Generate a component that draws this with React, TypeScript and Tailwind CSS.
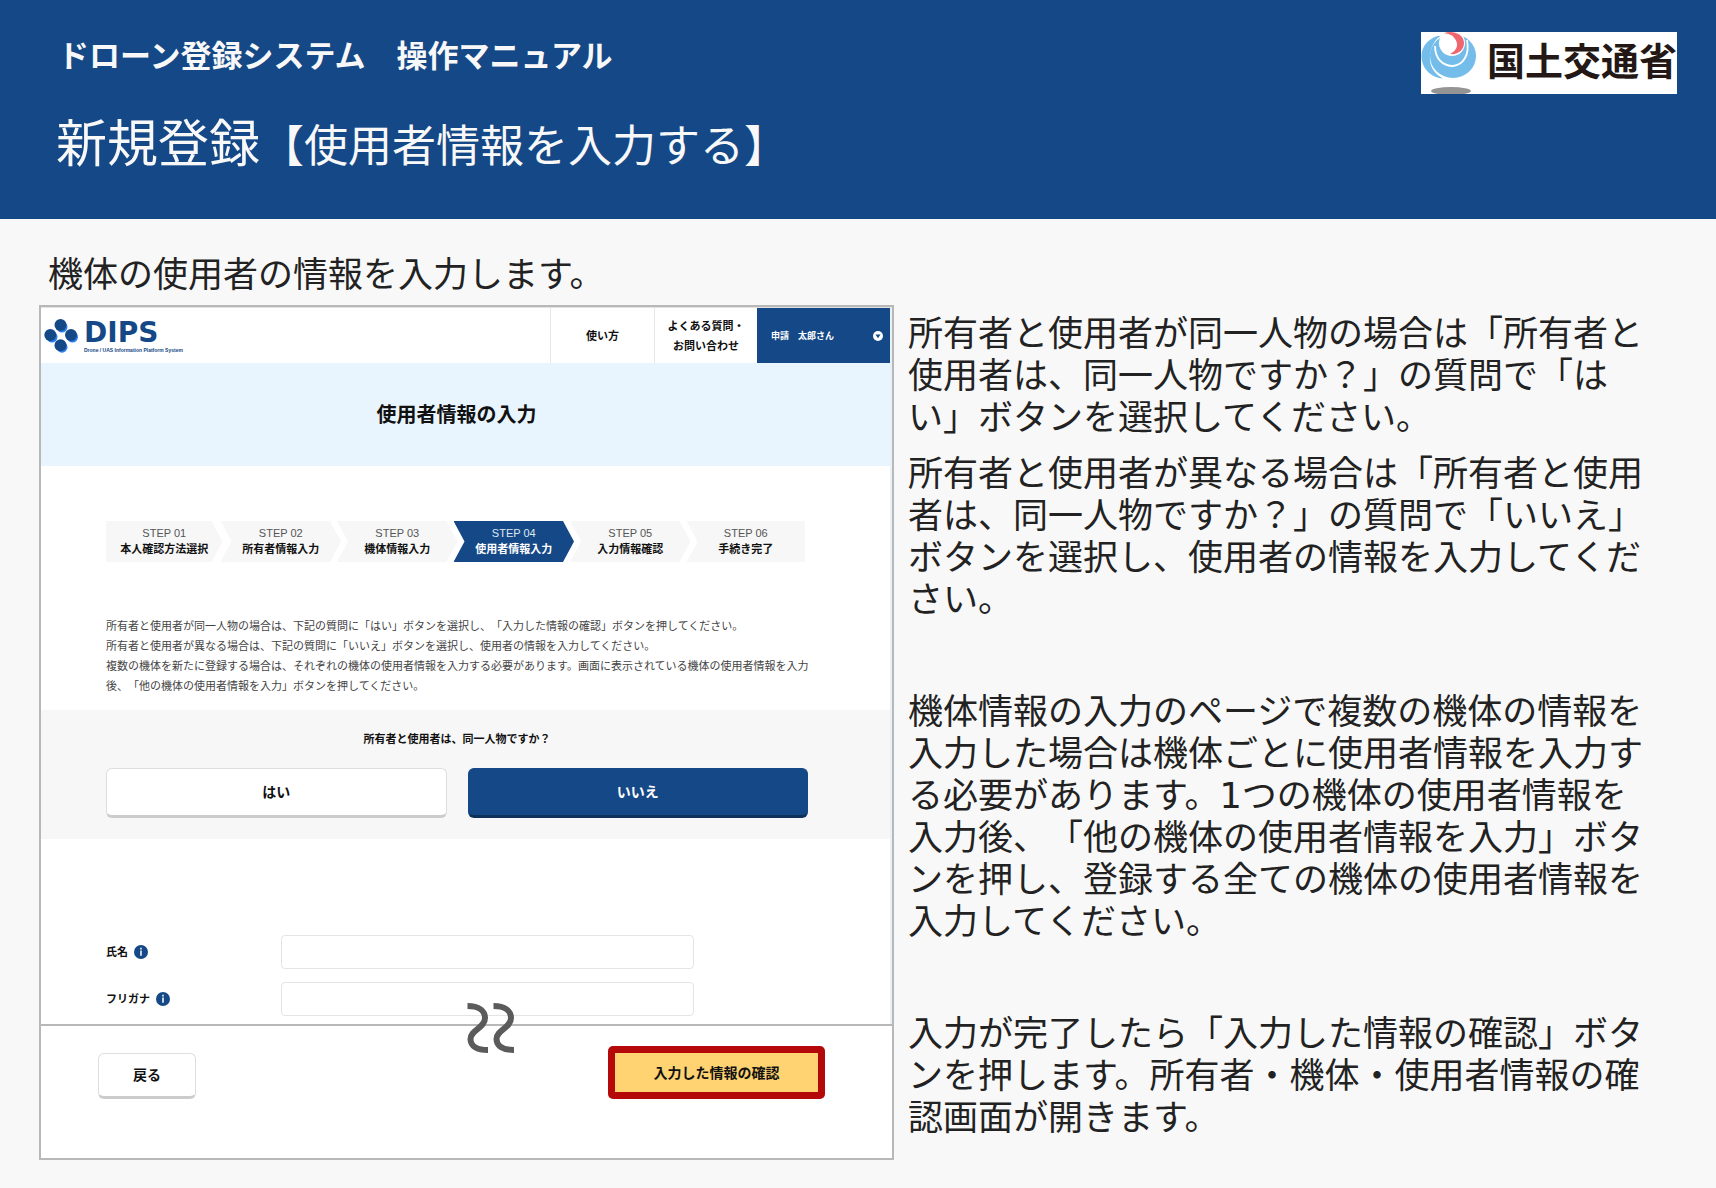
import { Fragment } from 'react';

const steps = [
  { no: 'STEP 01', label: '本人確認方法選択' },
  { no: 'STEP 02', label: '所有者情報入力' },
  { no: 'STEP 03', label: '機体情報入力' },
  { no: 'STEP 04', label: '使用者情報入力', active: true },
  { no: 'STEP 05', label: '入力情報確認' },
  { no: 'STEP 06', label: '手続き完了' },
];

const notes = [
  '所有者と使用者が同一人物の場合は、下記の質問に「はい」ボタンを選択し、「入力した情報の確認」ボタンを押してください。',
  '所有者と使用者が異なる場合は、下記の質問に「いいえ」ボタンを選択し、使用者の情報を入力してください。',
  '複数の機体を新たに登録する場合は、それぞれの機体の使用者情報を入力する必要があります。画面に表示されている機体の使用者情報を入力',
  '後、「他の機体の使用者情報を入力」ボタンを押してください。',
];

const fields = [
  { id: 'name', label: '氏名' },
  { id: 'kana', label: 'フリガナ' },
];

const guide = [
  [
    '所有者と使用者が同一人物の場合は「所有者と',
    '使用者は、同一人物ですか？」の質問で「は',
    'い」ボタンを選択してください。',
  ],
  [
    '所有者と使用者が異なる場合は「所有者と使用',
    '者は、同一人物ですか？」の質問で「いいえ」',
    'ボタンを選択し、使用者の情報を入力してくだ',
    'さい。',
  ],
  [
    '機体情報の入力のページで複数の機体の情報を',
    '入力した場合は機体ごとに使用者情報を入力す',
    'る必要があります。1つの機体の使用者情報を',
    '入力後、「他の機体の使用者情報を入力」ボタ',
    'ンを押し、登録する全ての機体の使用者情報を',
    '入力してください。',
  ],
  [
    '入力が完了したら「入力した情報の確認」ボタ',
    'ンを押します。所有者・機体・使用者情報の確',
    '認画面が開きます。',
  ],
];

function Lines({ lines }: { lines: string[] }) {
  return (
    <>
      {lines.map((line, i) => (
        <Fragment key={line}>
          {i > 0 && <br />}
          {line}
        </Fragment>
      ))}
    </>
  );
}

function MinistryLogo() {
  return (
    <div className="flex h-[62px] items-center bg-white">
      <svg viewBox="0 0 56 62" className="h-[62px] w-14 shrink-0" aria-hidden="true">
        <path d="M21 3 C8 5 0 14 0.500 25 C1 38 12 46 22 46.500 C12 41 8 33 9 23 C10 14 14 7 21 3Z" fill="#74bdea" />
        <ellipse cx="32" cy="24" rx="23" ry="22" fill="#74bdea" />
        <path d="M14 14 C14 28 23 34 32 34 C42 33 49 23 46 8" fill="none" stroke="#fff" strokeWidth="1.800" />
        <path d="M14 -2 L48 -2 L45 6 L43 2 L18 4 Z" fill="#fff" />
        <circle cx="31" cy="11" r="13" fill="#fff" />
        <path d="M23 1 C32 -2 43 2 43 11 C43 18 37 23 29 22 C36 19 38 12 34 7 C32 3 28 2 23 1Z" fill="#f0666f" />
        <ellipse cx="30" cy="59" rx="20" ry="4" fill="#949494" />
      </svg>
      <span className="pb-0.5 pl-2.5 text-[38px] leading-[50px] font-bold text-[#231815]">国土交通省</span>
    </div>
  );
}

function DipsLogo() {
  return (
    <a href="#" className="flex items-center gap-1" aria-label="DIPS">
      <svg viewBox="0 0 36 36" className="size-9" aria-hidden="true">
        <g fill="#2b80ee">
          <circle cx="18" cy="9" r="5.500" />
          <circle cx="8" cy="19" r="5.500" />
          <circle cx="28.500" cy="19" r="5.500" />
          <circle cx="18" cy="29.200" r="5.500" />
        </g>
        <g fill="#154886">
          <circle cx="16.500" cy="7" r="6" />
          <circle cx="6.300" cy="17" r="6" />
          <circle cx="27" cy="17" r="6" />
          <circle cx="16.500" cy="27.200" r="6" />
        </g>
      </svg>
      <span className="flex flex-col text-[#154886]">
        <span className="font-['DejaVu_Sans',sans-serif] text-[28px] leading-7 font-bold">DIPS</span>
        <span className="font-['Liberation_Sans',sans-serif] text-[5px] leading-[6px] font-bold">
          Drone / UAS Information Platform System
        </span>
      </span>
    </a>
  );
}

function InfoIcon() {
  return (
    <svg viewBox="0 0 14 14" className="size-3.5" aria-hidden="true">
      <circle cx="7" cy="7" r="7" fill="#154886" />
      <path d="M7 2.800v1.600M7 5.600v5.200" stroke="#fff" strokeWidth="1.500" />
    </svg>
  );
}

function AppNav() {
  return (
    <nav className="flex h-[55px] items-stretch pl-[3px] text-[11px] leading-5 font-bold text-[#111]">
      <div className="flex flex-1 items-center">
        <DipsLogo />
      </div>
      <a href="#" className="flex w-[104px] items-center justify-center border-l border-[#e6e6e6]">
        使い方
      </a>
      <a href="#" className="flex w-[103px] items-center justify-center border-l border-[#e6e6e6] text-center">
        <span>
          よくある質問・
          <br />
          お問い合わせ
        </span>
      </a>
      <button type="button" className="flex w-[133px] items-center justify-between bg-[#154886] pr-[7px] pl-3.5 text-[9px] text-white">
        申請　太郎さん
        <svg viewBox="0 0 10 10" className="size-2.5" aria-hidden="true">
          <circle cx="5" cy="5" r="5" fill="#fff" />
          <path d="M2.500 3.500h5L5 7.200z" fill="#154886" />
        </svg>
      </button>
    </nav>
  );
}

function StepBar() {
  return (
    <ol className="grid grid-cols-6">
      {steps.map((step, i) => {
        let shape = '-mx-0.5 [clip-path:polygon(0_0,calc(100%-11px)_0,100%_50%,calc(100%-11px)_100%,0_100%,11px_50%)]';
        if (i === 0) shape = '[clip-path:polygon(0_0,calc(100%-11px)_0,100%_50%,calc(100%-11px)_100%,0_100%)]';
        if (i === steps.length - 1) shape = '-ml-0.5 [clip-path:polygon(0_0,100%_0,100%_100%,0_100%,11px_50%)]';
        return (
          <li
            key={step.no}
            aria-current={step.active ? 'step' : undefined}
            className={`flex h-[41px] flex-col items-center justify-center pb-0.5 text-[11px] leading-4 whitespace-nowrap ${shape} ${
              step.active ? 'bg-[#154886] text-white' : 'bg-[#f7f7f7] text-[#111]'
            }`}
          >
            <span className={step.active ? 'text-[#dfe8f2]' : 'text-[#555]'}>{step.no}</span>
            <span className="font-bold">{step.label}</span>
          </li>
        );
      })}
    </ol>
  );
}

// 画面の省略を示す二重波線
function OmissionMark() {
  return (
    <svg viewBox="0 0 48 50" className="absolute left-1/2 -top-[23px] h-[50px] w-12" aria-hidden="true">
      <g fill="none" stroke="#5b5b5b" strokeWidth="6">
        <path d="M0.500 3 C12 3 18 8 18 15 C18 25 3.500 27 3.500 36 C3.500 43 10 47 21 47" />
        <path d="M26.500 3 C38 3 44 8 44 15 C44 25 29.500 27 29.500 36 C29.500 43 36 47 47 47" />
      </g>
    </svg>
  );
}

function ScreenPanel() {
  return (
    <div className="border-2 border-[#b8b8b8] bg-white text-[#111]">
      <div className="border-t border-r-2 border-t-[#e2e2e2] border-r-[#e8f1f9]">
        <AppNav />
        <h3 className="flex h-[103px] items-center justify-center bg-[#e8f5fe] pr-[18px] text-xl font-bold">
          使用者情報の入力
        </h3>

        <div className="pt-[55px] pr-[85px] pl-[65px]">
          <StepBar />
          <p className="pt-[54px] pb-3.5 text-[11px] leading-5 whitespace-nowrap text-[#444]">
            <Lines lines={notes} />
          </p>
        </div>

        <div className="bg-[#f7f7f7] pt-[19px] pr-[82px] pb-[21px] pl-[65px]">
          <p className="text-center text-[11px] leading-5 font-bold">所有者と使用者は、同一人物ですか？</p>
          <div className="mt-[19px] grid grid-cols-2 gap-[21px] text-sm font-bold">
            <button type="button" className="h-[50px] rounded-md border border-b-3 border-[#dedede] border-b-[#cccccc] bg-white">
              はい
            </button>
            <button type="button" className="h-[50px] rounded-md border border-b-3 border-[#154886] border-b-[#0e3159] bg-[#154886] text-white">
              いいえ
            </button>
          </div>
        </div>

        <form className="flex flex-col gap-[13px] pt-24 pr-[196px] pb-2 pl-[65px]">
          {fields.map((field) => (
            <div key={field.id} className="flex items-center">
              <label htmlFor={field.id} className="flex w-[175px] items-center gap-1.5 text-[11px] leading-5 font-bold">
                {field.label}
                <InfoIcon />
              </label>
              <input id={field.id} type="text" className="h-[34px] min-w-0 flex-1 rounded-sm border border-[#e4e4e4] bg-white px-2 text-[11px]" />
            </div>
          ))}
        </form>
      </div>

      <div className="relative flex h-[134px] items-start border-t-2 border-[#b8b8b8] pt-5 pr-[67px] pl-[57px]">
        <OmissionMark />
        <div className="flex flex-1 items-end justify-between text-sm font-bold">
          <button type="button" className="h-[46px] w-[98px] rounded-md border border-b-3 border-[#dedede] border-b-[#cccccc] bg-white">
            戻る
          </button>
          <button type="button" className="h-[53px] w-[217px] rounded-[5px] bg-[#b50909] p-[7px]">
            <span className="flex h-full items-center justify-center bg-[#ffd272]">入力した情報の確認</span>
          </button>
        </div>
      </div>
    </div>
  );
}

export default function App() {
  return (
    <div
      lang="ja"
      className="min-h-screen bg-[#f8f8f8] font-['Liberation_Sans','Noto_Sans_CJK_JP',sans-serif] text-[#222] [text-spacing-trim:space-all]"
    >
      <header className="flex h-[219px] items-start justify-between bg-[#154886] pt-8 pr-[39px] pl-14 whitespace-nowrap text-[#f8f8f8]">
        <div>
          <p className="pl-0.5 text-[31px] leading-[50px] font-bold">ドローン登録システム　操作マニュアル</p>
          <h1 className="pt-[25px] text-[51px] leading-[76px]">
            新規登録<span className="text-[44px]">【使用者情報を入力する】</span>
          </h1>
        </div>
        <MinistryLogo />
      </header>

      <main className="pt-[35px] pb-7 pl-[39px]">
        <h2 className="pb-[9px] pl-[9px] text-[35px] leading-[42px]">機体の使用者の情報を入力します。</h2>
        <div className="grid grid-cols-[minmax(0,855fr)_minmax(0,822fr)]">
          <ScreenPanel />
          <div className="flex flex-col gap-[70px] pt-2 pl-3.5 font-['DejaVu_Sans','Noto_Sans_CJK_JP',sans-serif] text-[35px] leading-[42px] whitespace-nowrap">
            <div className="flex flex-col gap-3.5">
              <p>
                <Lines lines={guide[0]} />
              </p>
              <p>
                <Lines lines={guide[1]} />
              </p>
            </div>
            <p>
              <Lines lines={guide[2]} />
            </p>
            <p>
              <Lines lines={guide[3]} />
            </p>
          </div>
        </div>
      </main>
    </div>
  );
}
